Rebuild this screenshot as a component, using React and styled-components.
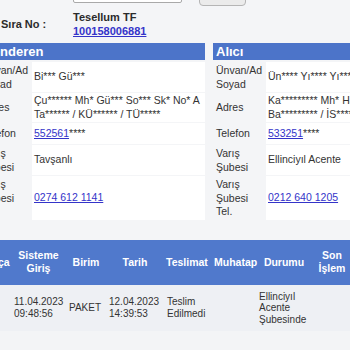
import styled, { createGlobalStyle } from "styled-components";

const GlobalStyle = createGlobalStyle`
  html, body {
    margin: 0;
    padding: 0;
    background: #f4f5f7;
    overflow: hidden;
  }
  body {
    font-family: "Liberation Sans", Arial, sans-serif;
    color: #333;
  }
`;

const Page = styled.div`
  width: 460px;
  margin: -18px 0 0 -21px;
`;

const SearchRow = styled.div`
  display: flex;
  align-items: flex-start;
  padding-left: 94px;
  gap: 17px;
`;

const SearchInput = styled.div`
  width: 107px;
  height: 19px;
  background: #fff;
  border: 1px solid #a9a9a9;
  border-radius: 2px;
`;

const SearchButton = styled.div`
  width: 45px;
  height: 22px;
  background: #ebebeb;
  border: 1px solid #b5b5b5;
  border-radius: 4px;
`;

const InfoRow = styled.div`
  display: grid;
  grid-template-columns: 94px 1fr;
  margin-top: 4px;
`;

const InfoLabel = styled.div`
  align-self: center;
  padding-left: 22px;
  font-size: 11px;
  font-weight: bold;
  color: #2b2b2b;
`;

const InfoValue = styled.div`
  font-size: 11px;
  font-weight: bold;
  line-height: 14px;
  color: #2b2b2b;
`;

const Link = styled.a`
  color: #3434c9;
  text-decoration: underline;
  font-weight: ${(p) => (p.$bold ? "bold" : "normal")};
`;

const Parties = styled.div`
  display: flex;
  gap: 8px;
  margin-top: 5px;
`;

const Section = styled.section`
  width: 226px;
`;

const SectionHeader = styled.div`
  height: 17px;
  line-height: 17px;
  padding-left: 3px;
  background: #4c74c9;
  color: #fff;
  font-size: 13px;
  font-weight: bold;
`;

const Fields = styled.div`
  display: grid;
  grid-template-columns: 53px 1fr;
  row-gap: 1px;
  margin-top: 2px;
`;

const FieldLabel = styled.div`
  display: flex;
  align-items: center;
  min-height: 18px;
  padding: 2px 3px 1px;
  font-size: 10.5px;
  line-height: 13.5px;
  color: #333;
`;

const FieldValue = styled.div`
  display: flex;
  align-items: center;
  padding: 1px 3px 1px 2px;
  background: #fff;
  font-size: 10.5px;
  line-height: 13.5px;
  color: #333;
  white-space: nowrap;
`;

const Movements = styled.div`
  margin-top: 20px;
  padding-bottom: 27px;
  background: #f3f4f6;
  border-bottom: 2px solid #a7a7a7;
`;

const Table = styled.table`
  border-collapse: collapse;
  table-layout: fixed;
  width: 373px;
`;

const Th = styled.th`
  height: 45px;
  padding: 0 2px 0 ${(p) => p.$indent || 2}px;
  background: #5079cc;
  color: #fff;
  font-size: 10.5px;
  font-weight: bold;
  line-height: 13px;
  text-align: center;
  vertical-align: middle;
`;

const Td = styled.td`
  padding: 6px 3px;
  background: #eef0f4;
  font-size: 10px;
  line-height: 11.5px;
  color: #333;
  text-align: left;
  vertical-align: middle;
`;

const columns = [
  { title: "Parça", width: 32 },
  { title: "Sisteme Giriş", width: 55 },
  { title: "Birim", width: 40 },
  { title: "Tarih", width: 58 },
  { title: "Teslimat", width: 38 },
  { title: "Muhatap", width: 54, indent: 12 },
  { title: "Durumu", width: 56 },
  { title: "Son İşlem", width: 40 },
];

const Party = ({ title, fields }) => (
  <Section>
    <SectionHeader>{title}</SectionHeader>
    <Fields>
      {fields.map((f, i) => [
        <FieldLabel key={"l" + i}>{f.label}</FieldLabel>,
        <FieldValue key={"v" + i}>{f.value}</FieldValue>,
      ])}
    </Fields>
  </Section>
);

const sender = [
  { label: "Ünvan/Ad Soyad", value: "Bi*** Gü***" },
  {
    label: "Adres",
    value: (
      <span>
        Çu****** Mh* Gü*** So*** Sk* No* A
        <br />
        Ta****** / KÜ****** / TÜ*****
      </span>
    ),
  },
  {
    label: "Telefon",
    value: (
      <span>
        <Link href="#">552561</Link>****
      </span>
    ),
  },
  { label: "Varış Şubesi", value: "Tavşanlı" },
  { label: "Varış Şubesi Tel.", value: <Link href="#">0274 612 1141</Link> },
];

const receiver = [
  { label: "Ünvan/Ad Soyad", value: "Ün**** Yı**** Yı***** Ti*****" },
  {
    label: "Adres",
    value: (
      <span>
        Ka********* Mh* Ha***** Sk* No* 1
        <br />
        Ba********* / İS*******
      </span>
    ),
  },
  {
    label: "Telefon",
    value: (
      <span>
        <Link href="#">533251</Link>****
      </span>
    ),
  },
  { label: "Varış Şubesi", value: "Ellinciyıl Acente" },
  { label: "Varış Şubesi Tel.", value: <Link href="#">0212 640 1205</Link> },
];

export default function App() {
  return (
    <>
      <GlobalStyle />
      <Page>
        <SearchRow>
          <SearchInput />
          <SearchButton />
        </SearchRow>

        <InfoRow>
          <InfoLabel>Sıra No :</InfoLabel>
          <InfoValue>
            Tesellum TF
            <br />
            <Link href="#" $bold>
              100158006881
            </Link>
          </InfoValue>
        </InfoRow>

        <Parties>
          <Party title="Gönderen" fields={sender} />
          <Party title="Alıcı" fields={receiver} />
        </Parties>

        <Movements>
          <Table>
            <colgroup>
              {columns.map((c) => (
                <col key={c.title} style={{ width: c.width }} />
              ))}
            </colgroup>
            <thead>
              <tr>
                {columns.map((c) => (
                  <Th key={c.title} $indent={c.indent}>
                    {c.title}
                  </Th>
                ))}
              </tr>
            </thead>
            <tbody>
              <tr>
                <Td>1</Td>
                <Td>
                  11.04.2023
                  <br />
                  09:48:56
                </Td>
                <Td>PAKET</Td>
                <Td>
                  12.04.2023
                  <br />
                  14:39:53
                </Td>
                <Td>
                  Teslim
                  <br />
                  Edilmedi
                </Td>
                <Td></Td>
                <Td>
                  Ellinciyıl
                  <br />
                  Acente
                  <br />
                  Şubesinde
                </Td>
                <Td></Td>
              </tr>
            </tbody>
          </Table>
        </Movements>
      </Page>
    </>
  );
}
